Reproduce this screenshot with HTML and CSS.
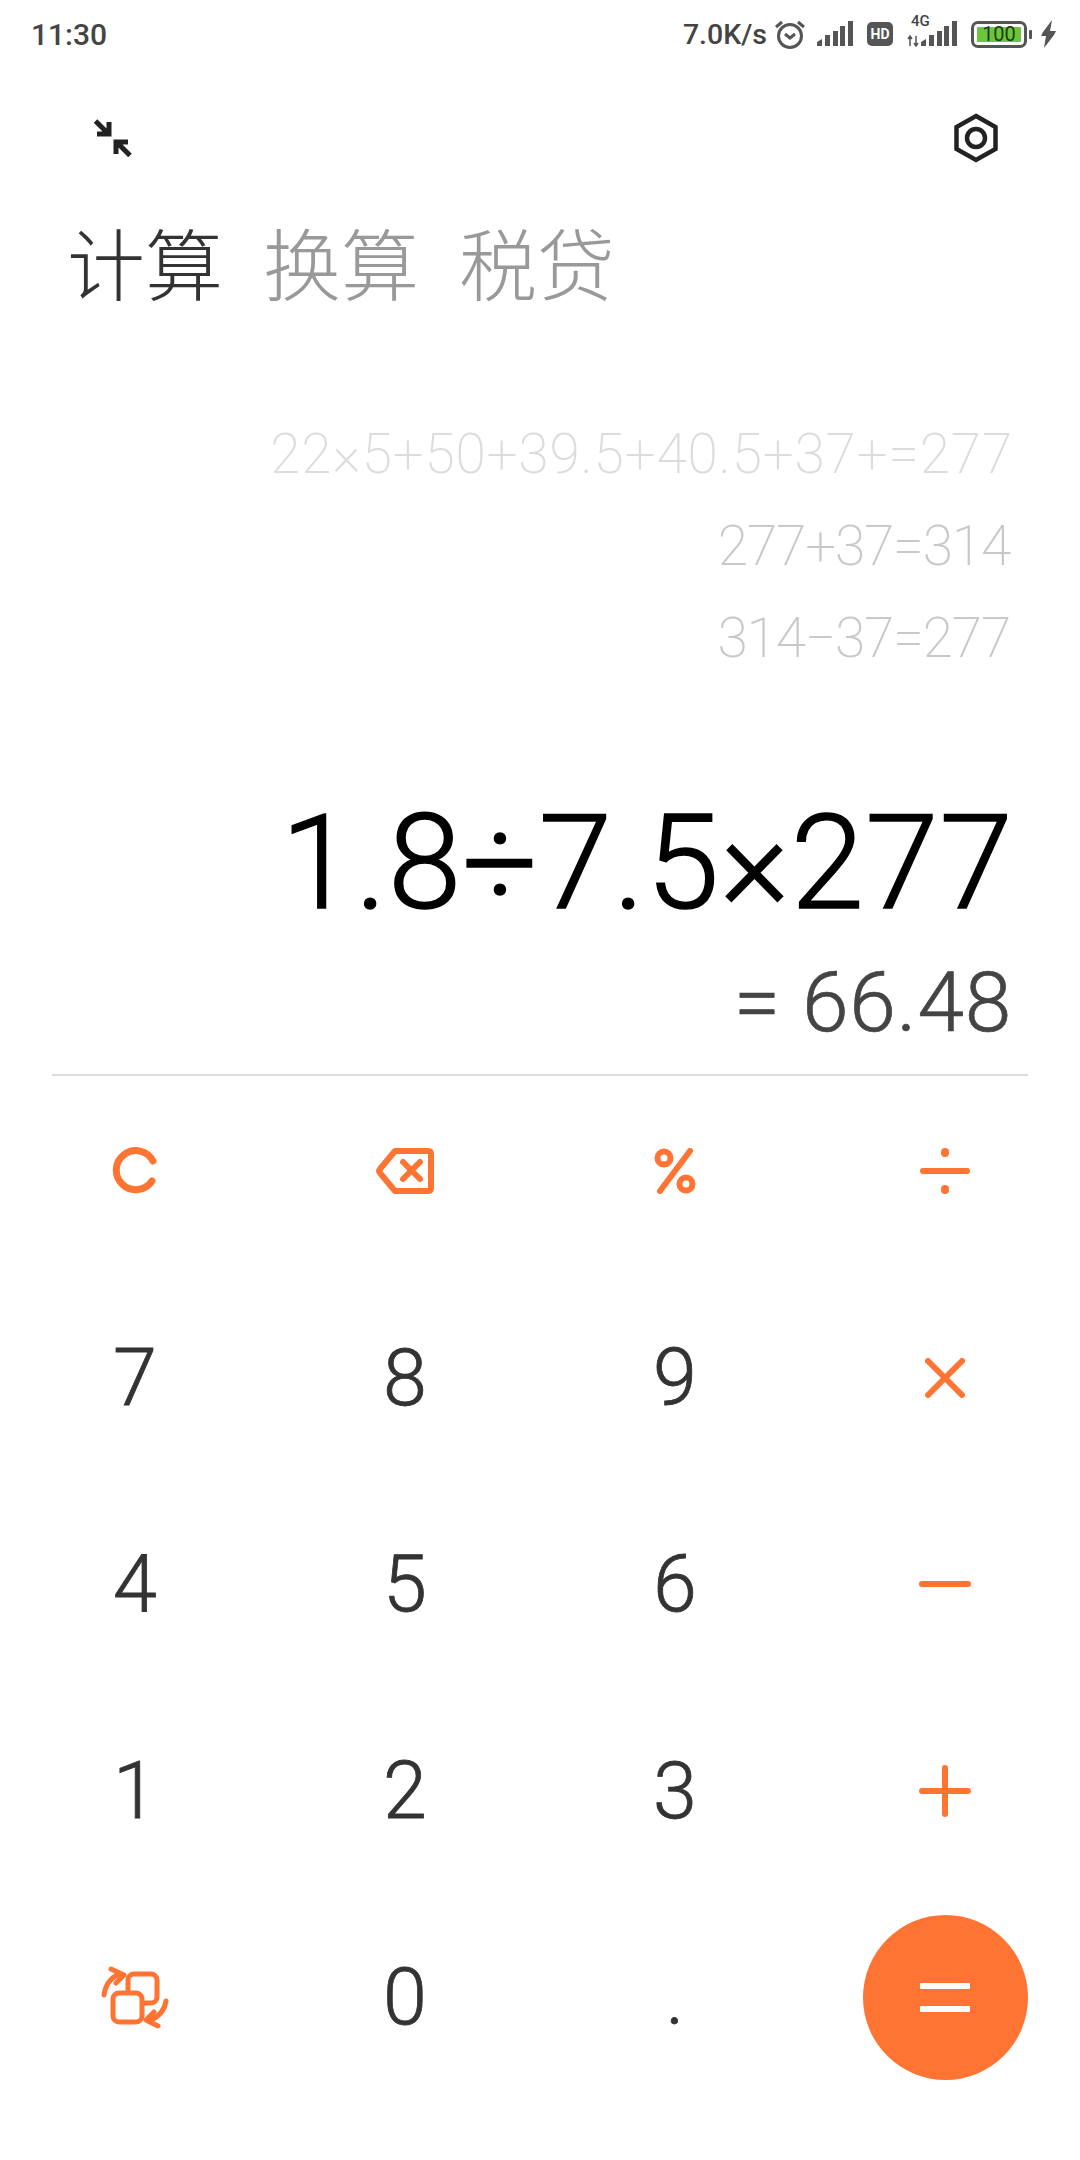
FILE: index.html
```html
<!DOCTYPE html>
<html lang="zh-CN">

<head>
    <meta charset="UTF-8">
    <meta name="viewport" content="width=device-width, initial-scale=1">
    <title>计算器</title>
    <link rel="stylesheet" href="styles.css">
</head>

<body>
    <main class="phone">
        <div class="status-bar">
            <span class="time">11:30</span>
            <div class="status-icons">
                <span class="speed">7.0K/s</span>
                <svg class="st-alarm" width="32" height="30" viewBox="0 0 32 30">
                    <circle cx="16" cy="17" r="11.5" />
                    <path d="M11 15l5 4 5-4" />
                    <path d="M2 8l6-5M30 8l-6-5" />
                </svg>
                <svg class="st-bars" width="36" height="26" viewBox="0 0 36 26">
                    <path d="M0 25v-4l5-3v7zM8 25V14h5v11zM16 25V10h5v15zM23 25V5h5v20zM31 25V0h5v25z" />
                </svg>
                <span class="hd">HD</span>
                <div class="st-net">
                    <span class="net-label">4G</span>
                    <svg width="50" height="26" viewBox="0 0 50 26">
                        <path class="arrows" d="M3 15v10M1 18l2-3 2 3M9 15v10M7 22l2 3 2-3" />
                        <path d="M14 25v-4l5-3v7zM22 25V14h5v11zM30 25V10h5v15zM37 25V5h5v20zM45 25V0h5v25z" />
                    </svg>
                </div>
                <div class="battery">
                    <span class="battery-level">100</span>
                </div>
                <span class="battery-tip"></span>
                <svg class="st-bolt" width="15" height="28" viewBox="0 0 15 28">
                    <path d="M11 0L2 12l-2 4h5L3 28l10-13 2-4H9z" />
                </svg>
            </div>
        </div>

        <div class="tools">
            <svg class="icon-dark" width="38" height="38" viewBox="0 0 38 38">
                <path d="M1.5 2L14 14.5M3 15h12V3M36 36.5L23.5 24M34 23H22v12" />
            </svg>
            <svg class="icon-dark icon-hex" width="46" height="50" viewBox="0 0 46 50">
                <path d="M23 3l19.5 11v22L23 47 3.5 36V14z" />
                <circle cx="23" cy="25" r="9" />
            </svg>
        </div>

        <nav class="tabs">
            <span class="tab tab-active">计算</span>
            <span class="tab">换算</span>
            <span class="tab">税贷</span>
        </nav>

        <section class="history">
            <p class="hist-far">22×5+50+39.5+40.5+37+=277</p>
            <p>277+37=314</p>
            <p>314−37=277</p>
        </section>

        <section class="display">
            <div class="expr">1.8÷7.5×277</div>
            <div class="result">= 66.48</div>
        </section>

        <div class="keypad">
            <div class="key">
                <svg class="icon-op" width="46" height="48" viewBox="0 0 46 48">
                    <path d="M41 14A19.5 19.5 0 1 0 40 34" />
                </svg>
            </div>
            <div class="key">
                <svg class="icon-op icon-clear" width="58" height="46" viewBox="0 0 58 46">
                    <path d="M19 3h33q3 0 3 3v34q0 3-3 3H19L4 25q-2-2 0-4z" />
                    <path d="M27 14l17 17M44 14L27 31" />
                </svg>
            </div>
            <div class="key">
                <svg class="icon-op icon-clear" width="42" height="46" viewBox="0 0 42 46">
                    <circle cx="10" cy="10" r="6.5" />
                    <circle cx="32" cy="36" r="6.5" />
                    <path class="thin" d="M36 3L6 43" />
                </svg>
            </div>
            <div class="key">
                <svg class="icon-op" width="50" height="46" viewBox="0 0 50 46">
                    <path class="thin" d="M3 23h44" />
                    <path class="dot" d="M25 4v1M25 41v1" />
                </svg>
            </div>

            <div class="key">7</div>
            <div class="key">8</div>
            <div class="key">9</div>
            <div class="key">
                <svg class="icon-op" width="40" height="40" viewBox="0 0 40 40">
                    <path class="thin" d="M3 3l34 34M37 3L3 37" />
                </svg>
            </div>

            <div class="key">4</div>
            <div class="key">5</div>
            <div class="key">6</div>
            <div class="key">
                <svg class="icon-op" width="52" height="8" viewBox="0 0 52 8">
                    <path class="thin" d="M3 4h46" />
                </svg>
            </div>

            <div class="key">1</div>
            <div class="key">2</div>
            <div class="key">3</div>
            <div class="key">
                <svg class="icon-op" width="52" height="52" viewBox="0 0 52 52">
                    <path class="thin" d="M3 26h46M26 3v46" />
                </svg>
            </div>

            <div class="key">
                <svg class="icon-op icon-swap" width="68" height="64" viewBox="0 0 68 64">
                    <rect x="27" y="9" width="29" height="29" rx="6" />
                    <rect class="front" x="12" y="28" width="29" height="29" rx="6" />
                    <path d="M3 30Q5 15 18 9M10 4l13 6-8 8M65 36Q63 49 50 55M57 61l-12-6 8-8" />
                </svg>
            </div>
            <div class="key">0</div>
            <div class="key">.</div>
            <div class="key">
                <div class="equals"><span></span><span></span></div>
            </div>
        </div>
    </main>
</body>

</html>
```

FILE: styles.css
```css
* {
    box-sizing: border-box;
}

body {
    margin: 0;
    background: #fff;
    font-family: Roboto, "Noto Sans CJK SC", sans-serif;
}

.phone {
    width: 1080px;
    height: 2160px;
    overflow: hidden;
}

p {
    margin: 0;
}

/* Status bar */
.status-bar {
    display: flex;
    justify-content: space-between;
    align-items: center;
    height: 68px;
    padding: 0 24px 0 31px;
    color: #444;
}

.time {
    font-size: 30px;
    font-weight: 500;
}

.status-icons {
    display: flex;
    align-items: center;
}

.speed {
    font-size: 28.5px;
    font-weight: 500;
    margin-right: 7px;
}

.st-alarm {
    fill: none;
    stroke: #555;
    stroke-width: 3;
    margin-right: 11px;
}

.st-bars {
    fill: #555;
    margin-right: 14px;
}

.hd {
    width: 26px;
    height: 24px;
    background: #555;
    color: #fff;
    border-radius: 5px;
    font-size: 14px;
    font-weight: 700;
    line-height: 24px;
    text-align: center;
    margin-right: 14px;
}

.st-net {
    position: relative;
    margin-right: 14px;
    height: 26px;
}

.st-net svg {
    display: block;
    fill: #555;
}

.st-net .arrows {
    fill: none;
    stroke: #555;
    stroke-width: 1.5;
}

.net-label {
    position: absolute;
    left: 4px;
    top: -9px;
    font-size: 15px;
    font-weight: 500;
    line-height: 18px;
    color: #444;
}

.battery {
    width: 56px;
    height: 27px;
    border: 3px solid #555;
    border-radius: 7px;
    padding: 3px;
}

.battery-level {
    display: block;
    height: 15px;
    background: #6cc63a;
    border-radius: 1px;
    color: #1d3a10;
    font-size: 20px;
    line-height: 15px;
    text-align: center;
}

.battery-tip {
    width: 3px;
    height: 9px;
    margin: 0 9px 0 2px;
    background: #555;
    border-radius: 1px;
}

.st-bolt {
    fill: #555;
}

/* Top tools */
.tools {
    display: flex;
    justify-content: space-between;
    align-items: center;
    height: 140px;
    padding: 0 81px 0 94px;
}

.icon-dark {
    fill: none;
    stroke: #222;
    stroke-width: 5;
}

.icon-hex {
    stroke-width: 4.5;
}

/* Tabs */
.tabs {
    display: flex;
    gap: 40px;
    margin-top: 3px;
    padding-left: 67px;
    font-family: "Noto Sans CJK SC", sans-serif;
    font-size: 78px;
    font-weight: 300;
    line-height: 100px;
}

.tab {
    color: #999;
}

.tab-active {
    color: #333;
}

/* History lines */
.history {
    margin-top: 97px;
    padding-right: 70px;
    text-align: right;
    font-size: 55px;
    font-weight: 200;
    line-height: 92px;
    letter-spacing: -1.15px;
    color: #c8c8c8;
}

.hist-far {
    color: #dcdcdc;
    letter-spacing: 0.8px;
    margin-right: -3px;
}

/* Current expression */
.display {
    display: flex;
    flex-direction: column;
    justify-content: flex-end;
    gap: 30px;
    margin: 0 52px;
    height: 392px;
    padding: 0 14px 26px 0;
    border-bottom: 2px solid #ddd;
    text-align: right;
}

.expr {
    font-size: 132px;
    font-weight: 300;
    line-height: 130px;
    letter-spacing: 1.2px;
    -webkit-text-stroke: 1.5px #000;
    color: #000;
}

.result {
    font-size: 84px;
    font-weight: 300;
    line-height: 90px;
    letter-spacing: 0.7px;
    -webkit-text-stroke: 0.7px #444;
    margin-right: 2px;
    color: #444;
}

/* Keypad */
.keypad {
    display: grid;
    grid-template-columns: repeat(4, 270px);
    grid-auto-rows: 190px;
    row-gap: 16.5px;
}

.key {
    display: flex;
    justify-content: center;
    align-items: center;
    font-size: 79px;
    font-weight: 300;
    -webkit-text-stroke: 0.8px #333;
    color: #333;
}

.icon-op {
    fill: none;
    stroke: #ff7433;
    stroke-width: 7;
    stroke-linecap: round;
    stroke-linejoin: round;
}

.icon-op .thin {
    stroke-width: 6;
}

.icon-op .dot {
    stroke-width: 8;
}

.icon-clear {
    stroke-width: 6;
}

.icon-swap {
    stroke-width: 5;
}

.icon-swap .front {
    fill: #fff;
}

.equals {
    display: flex;
    flex-direction: column;
    justify-content: center;
    gap: 17px;
    align-items: center;
    width: 165px;
    height: 165px;
    flex: none;
    border-radius: 50%;
    background: #ff7433;
}

.equals span {
    width: 50px;
    height: 6px;
    border-radius: 1px;
    background: #fff;
}
```
